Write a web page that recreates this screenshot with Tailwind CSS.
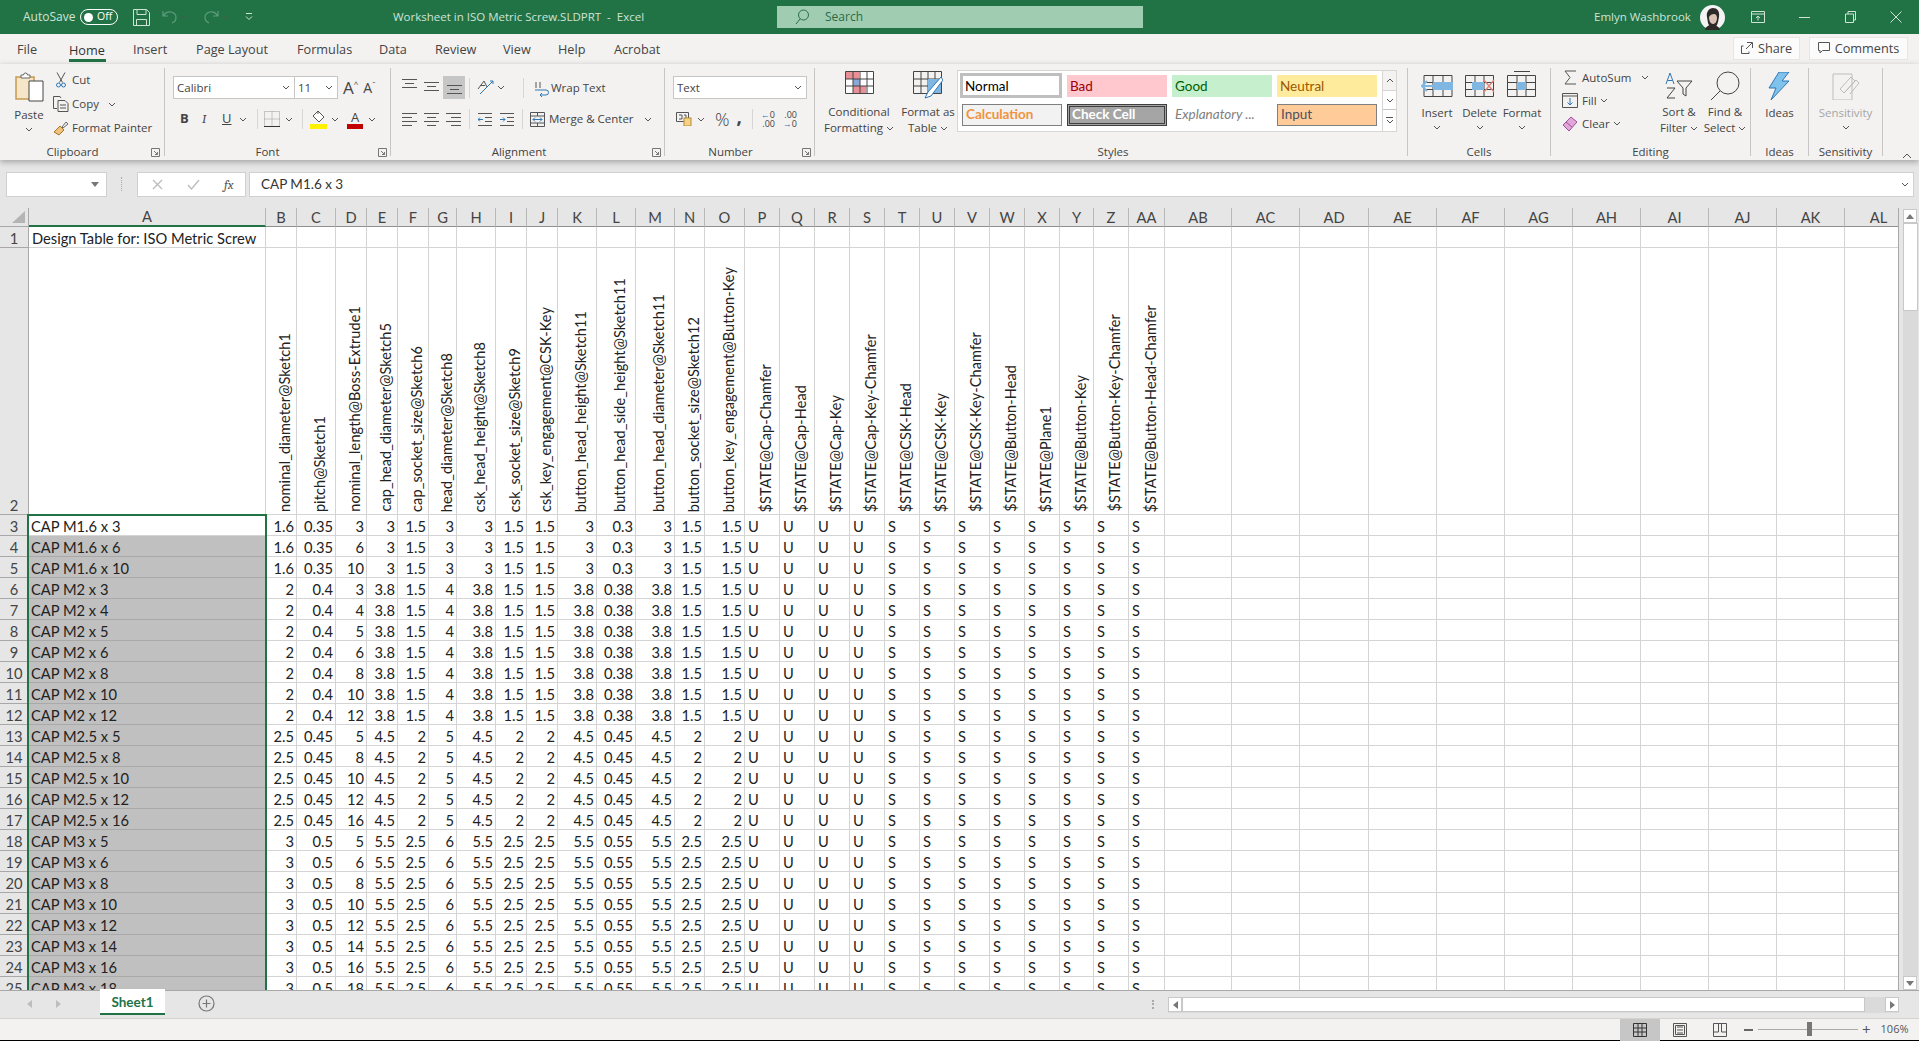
<!DOCTYPE html>
<html>
<head>
<title>Worksheet in ISO Metric Screw.SLDPRT - Excel</title>
<meta charset="UTF-8" />
<script src="https://cdn.jsdelivr.net/npm/@tailwindcss/browser@4"></script>
</head>
<body class="w-[1919px] h-[1041px] overflow-hidden bg-[#e6e6e6] font-['Open_Sans',sans-serif] text-[11.5px] text-[#444]">

<svg class="hidden">
  <symbol id="chev" viewBox="0 0 8 5"><path d="M1 1l3 3 3-3" fill="none" stroke="#555" stroke-width="1"/></symbol>
  <symbol id="launch" viewBox="0 0 9 9"><path d="M.5.5h8v8h-8zM3 3l3.500 3.500M6.500 4v2.500H4" fill="none" stroke="#777" stroke-width="1"/></symbol>
</svg>

<!-- title bar -->
<div class="h-[34px] bg-[#217346] flex items-center text-[#cfe3d7] text-[12px]">
  <span class="ml-[23px] w-[52px]">AutoSave</span>
  <div class="ml-[5px] w-[38px] h-[16px] rounded-full border border-white flex items-center text-[10.5px] text-white">
    <span class="ml-[3px] w-[9px] h-[9px] rounded-full bg-white"></span><span class="ml-[4px]">Off</span>
  </div>
  <svg class="ml-[15px]" width="17" height="17" viewBox="0 0 17 17" fill="none" stroke="#cfe3d7"><path d="M.5.500h13l3 3v13H.5zM4 .5v5h9v-5M3.500 16.500v-6h10v6"/></svg>
  <svg class="ml-[12px]" width="16" height="14" viewBox="0 0 16 14" fill="none" stroke="#5f9c7c" stroke-width="1.2"><path d="M1 1v5h5M1.500 6C3 3 6 1.500 9 2c3 .6 5 3 5 5.500 0 2.500-1.500 4.500-4 5.500"/></svg>
  <svg class="ml-[3px]" width="7" height="5"><use href="#chev"/></svg>
  <svg class="ml-[15px]" width="16" height="14" viewBox="0 0 16 14" fill="none" stroke="#5f9c7c" stroke-width="1.2"><path d="M15 1v5h-5M14.500 6C13 3 10 1.500 7 2c-3 .6-5 3-5 5.500 0 2.500 1.500 4.500 4 5.500"/></svg>
  <svg class="ml-[3px]" width="7" height="5"><use href="#chev"/></svg>
  <svg class="ml-[16px]" width="8" height="9" viewBox="0 0 8 9" fill="none" stroke="#cfe3d7"><path d="M1 .5h6M1 3.500l3 3 3-3"/></svg>
  <span class="ml-[140px] w-[250px] text-[11.5px] whitespace-pre">Worksheet in ISO Metric Screw.SLDPRT  -  Excel</span>
  <div class="ml-[134px] w-[366px] h-[22px] bg-[#a0cdb2] flex items-center text-[#2c6b49]">
    <svg class="ml-[18px]" width="14" height="16" viewBox="0 0 14 16" fill="none" stroke="#2c6b49"><circle cx="8.500" cy="6" r="5"/><path d="M5 10l-4 5"/></svg>
    <span class="ml-[16px]">Search</span>
  </div>
  <span class="ml-[451px] w-[97px] whitespace-nowrap text-[11.5px]">Emlyn Washbrook</span>
  <svg class="ml-[9px]" width="25" height="25" viewBox="0 0 25 25"><circle cx="12.500" cy="12.500" r="12.500" fill="#f4f4f4"/><path d="M7 12c-1-5 2-9 6-9s7 3 6 9l-1 5c-1 4-3 6-5 6s-4-2-5-5z" fill="#2d2a28"/><path d="M9 12c1-2 3-3 5-3s3 2 3 4-1 6-4 6-4-4-4-7z" fill="#d9c3b5"/><path d="M5 25c1-4 4-5 7-5s7 1 8 5z" fill="#2d2a28"/></svg>
  <div class="ml-auto flex">
    <span class="w-[46px] flex justify-center"><svg width="14" height="12" viewBox="0 0 14 12" fill="none" stroke="#cfe3d7"><path d="M.5.500h13v11H.5zM.5 3h13M7 9.500V5M5 7l2-2 2 2"/></svg></span>
    <span class="w-[46px] flex justify-center items-center"><span class="w-[11px] h-px bg-[#cfe3d7]"></span></span>
    <span class="w-[46px] flex justify-center"><svg width="11" height="12" viewBox="0 0 11 12" fill="none" stroke="#cfe3d7"><path d="M.5 3h8v8.500h-8zM3 3V.500h7.500V9H8.500"/></svg></span>
    <span class="w-[46px] flex justify-center"><svg width="12" height="12" viewBox="0 0 12 12" stroke="#cfe3d7"><path d="M.500.500l11 11M11.500.500l-11 11"/></svg></span>
  </div>
</div>

<!-- tabs -->
<div class="h-[30px] bg-[#f3f2f1] flex items-center text-[12.7px] leading-none relative">
  <span class="ml-[17px] w-[52px]">File</span>
  <span class="w-[64px] h-[30px] pt-[10px] text-[#333] relative">Home<span class="absolute left-0 w-[37px] top-[25px] h-[3px] bg-[#217346]"></span></span>
  <span class="w-[63px]">Insert</span>
  <span class="w-[101px]">Page Layout</span>
  <span class="w-[82px]">Formulas</span>
  <span class="w-[56px]">Data</span>
  <span class="w-[68px]">Review</span>
  <span class="w-[55px]">View</span>
  <span class="w-[56px]">Help</span>
  <span>Acrobat</span>
  <div class="ml-auto mr-[11px] flex gap-[9px] mt-[-2px]">
    <div class="w-[67px] h-[23px] bg-white/70 border border-[#e8e6e4] flex items-center justify-center gap-[5px]">
      <svg width="12" height="12" viewBox="0 0 12 12" fill="none" stroke="#555"><path d="M6 .500h5.500V6M11 1L5 7M8 9.500v2H.500V4h2"/></svg>Share</div>
    <div class="w-[99px] h-[23px] bg-white/70 border border-[#e8e6e4] flex items-center justify-center gap-[5px]">
      <svg width="12" height="12" viewBox="0 0 12 12" fill="none" stroke="#555"><path d="M.500.500h11v8H4.500L2 11V8.500H.500z"/></svg>Comments</div>
  </div>
</div>

<!-- ribbon -->
<div class="h-[96px] bg-[#f3f2f1] shadow-[0_2px_6px_rgba(0,0,0,0.3)] flex pt-[4px] relative z-10">

  <!-- clipboard -->
  <div class="w-[165px] h-[88px] border-r border-[#c8c6c4] flex flex-col">
    <div class="flex-1 flex">
      <div class="ml-[9px] w-[40px] flex flex-col items-center pt-[4px]">
        <svg width="29" height="30" viewBox="0 0 29 30" fill="none"><path d="M1 5h18v22H1z" fill="#f6e6c8" stroke="#c79a4f" stroke-width="1.500"/><path d="M6 6V3h2.500a2 2 0 0 1 4 0H15v3z" fill="#fff" stroke="#666"/><path d="M14 9h14v20H14z" fill="#fff" stroke="#444"/></svg>
        <span class="mt-[5px] leading-[16px]">Paste</span>
        <svg class="mt-[4px]" width="8" height="5"><use href="#chev"/></svg>
      </div>
      <div class="ml-[4px] flex flex-col">
        <div class="h-[24px] flex items-center">
          <svg class="ml-[3px] mr-[6px]" width="10" height="16" viewBox="0 0 10 16" fill="none" stroke="#555"><path d="M1 .500l5.500 10M9 .500L3.500 10.500"/><circle cx="2.500" cy="13" r="2" stroke="#2f77b5"/><circle cx="7.500" cy="13" r="2" stroke="#2f77b5"/></svg>Cut</div>
        <div class="h-[24px] flex items-center">
          <svg class="mr-[3px]" width="16" height="16" viewBox="0 0 16 16" fill="none" stroke="#555"><path d="M4 12.500H.5V.500H7L8 2M5 4.500h7l3 3v8H5zM7 9h6M7 12h6"/></svg>Copy
          <svg class="ml-[9px]" width="8" height="5"><use href="#chev"/></svg></div>
        <div class="h-[24px] flex items-center whitespace-nowrap">
          <svg class="mr-[3px]" width="16" height="16" viewBox="0 0 16 16" fill="none"><path d="M9 7l4-5 2 2-5 4z" stroke="#666"/><path d="M1 12l6-6 4 4-5 5z" fill="#f0c27a" stroke="#a9742d"/></svg>Format Painter</div>
      </div>
    </div>
    <div class="h-[8px] flex items-center"><span class="flex-1 text-center pr-[6px]">Clipboard</span><svg class="mr-[4px]" width="9" height="9"><use href="#launch"/></svg></div>
  </div>

  <!-- font -->
  <div class="w-[226px] h-[88px] border-r border-[#c8c6c4] flex flex-col">
    <div class="flex-1">
      <div class="mt-[8px] ml-[8px] flex items-center h-[23px]">
        <div class="w-[122px] h-[23px] bg-white border border-[#c8c6c4] flex items-center pl-[3px] justify-between pr-[4px]">Calibri<svg width="8" height="5"><use href="#chev"/></svg></div>
        <div class="w-[43px] h-[23px] bg-white border border-l-0 border-[#c8c6c4] flex items-center pl-[3px] justify-between pr-[4px]">11<svg width="8" height="5"><use href="#chev"/></svg></div>
        <span class="ml-[5px] text-[17px] leading-none">A</span><span class="text-[8px] mt-[-8px]">^</span>
        <span class="ml-[5px] text-[14px] leading-none">A</span><span class="text-[8px] mt-[-8px]">ˇ</span>
      </div>
      <div class="mt-[9px] flex items-center h-[22px] text-[13px]">
        <b class="ml-[15px] w-[22px]">B</b><i class="w-[20px] font-serif">I</i><u class="w-[15px]">U</u>
        <svg class="ml-[2px]" width="8" height="5"><use href="#chev"/></svg>
        <span class="ml-[10px] w-px h-[20px] bg-[#d8d6d4]"></span>
        <svg class="ml-[6px]" width="16" height="16" viewBox="0 0 16 16" fill="none" stroke="#999" stroke-dasharray="1 1"><path d="M.500.500h15v15H.500zM8 .500v15M.500 8h15"/><path d="M0 15.500h16" stroke="#333" stroke-dasharray="none"/></svg>
        <svg class="ml-[5px]" width="8" height="5"><use href="#chev"/></svg>
        <span class="ml-[9px] w-px h-[20px] bg-[#d8d6d4]"></span>
        <svg class="ml-[7px]" width="17" height="19" viewBox="0 0 17 19" fill="none"><path d="M8 1l6 6-5 5-6-6z" fill="#fff" stroke="#555"/><path d="M8 1V4" stroke="#555"/><rect y="14" width="17" height="5" fill="#fff200"/></svg>
        <svg class="ml-[4px]" width="8" height="5"><use href="#chev"/></svg>
        <span class="ml-[8px] w-[16px] flex flex-col items-center leading-[14px] font-normal">A<span class="w-[16px] h-[5px] bg-[#c00000]"></span></span>
        <svg class="ml-[5px]" width="8" height="5"><use href="#chev"/></svg>
      </div>
    </div>
    <div class="h-[8px] flex items-center"><span class="flex-1 text-center pr-[8px]">Font</span><svg class="mr-[3px]" width="9" height="9"><use href="#launch"/></svg></div>
  </div>

  <!-- alignment -->
  <div class="w-[274px] h-[88px] border-r border-[#c8c6c4] flex flex-col">
    <div class="flex-1">
      <div class="mt-[8px] flex items-center h-[23px]">
        <svg class="ml-[11px] -translate-y-[3px]" width="15" height="12" viewBox="0 0 15 12" stroke="#555"><path d="M0 .500h15M3 4.500h9M0 8.500h15"/></svg>
        <svg class="ml-[7px] -translate-y-[2px]" width="15" height="12" viewBox="0 0 15 12" stroke="#555"><path d="M0 2.500h15M3 6.500h9M0 10.500h15"/></svg>
        <span class="ml-[4px] w-[22px] h-[23px] bg-[#c6c6c6] flex items-center justify-center"><svg width="15" height="12" viewBox="0 0 15 12" stroke="#555"><path d="M0 3.500h15M3 7.500h9M0 11.500h15"/></svg></span>
        <span class="ml-[4px] w-px h-[20px] bg-[#d8d6d4]"></span>
        <svg class="ml-[7px]" width="17" height="18" viewBox="0 0 17 18" fill="none" stroke="#555"><path d="M3 15l13-13" stroke="#2f77b5"/><path d="M13 2h3v3" stroke="#2f77b5"/><path d="M1 10l6-8 3 6M3 6.500h5"/></svg>
        <svg class="ml-[3px]" width="8" height="5"><use href="#chev"/></svg>
        <span class="ml-[18px] w-px h-[20px] bg-[#d8d6d4]"></span>
        <svg class="ml-[10px]" width="15" height="18" viewBox="0 0 15 18" fill="none" stroke="#2f77b5"><path d="M1 11h11a2.500 2.500 0 0 1 0 5H6M8 14l-2 2 2 2"/><path d="M2 3v6M6 3v6" stroke="#555"/></svg>
        <span class="ml-[2px]">Wrap Text</span>
      </div>
      <div class="mt-[9px] flex items-center h-[22px]">
        <svg class="ml-[11px]" width="15" height="13" viewBox="0 0 15 13" stroke="#555"><path d="M0 .500h15M0 4.500h10M0 8.500h15M0 12.500h10"/></svg>
        <svg class="ml-[7px]" width="15" height="13" viewBox="0 0 15 13" stroke="#555"><path d="M0 .500h15M3 4.500h9M0 8.500h15M3 12.500h9"/></svg>
        <svg class="ml-[7px]" width="15" height="13" viewBox="0 0 15 13" stroke="#555"><path d="M0 .500h15M5 4.500h10M0 8.500h15M5 12.500h10"/></svg>
        <span class="ml-[8px] w-px h-[20px] bg-[#d8d6d4]"></span>
        <svg class="ml-[8px]" width="14" height="13" viewBox="0 0 14 13" fill="none" stroke="#555"><path d="M0 .500h14M7 4.500h7M7 8.500h7M0 12.500h14"/><path d="M5 6.500H0M2 4.500l-2 2 2 2" stroke="#2f77b5"/></svg>
        <svg class="ml-[8px]" width="14" height="13" viewBox="0 0 14 13" fill="none" stroke="#555"><path d="M0 .500h14M7 4.500h7M7 8.500h7M0 12.500h14"/><path d="M0 6.500h5M3 4.500l2 2-2 2" stroke="#2f77b5"/></svg>
        <span class="ml-[8px] w-px h-[20px] bg-[#d8d6d4]"></span>
        <svg class="ml-[7px]" width="15" height="15" viewBox="0 0 15 15" fill="none" stroke="#555"><path d="M.500.500h14v14H.500zM.500 4h14M.500 11h14M7.500.500V4M7.500 11v4"/><path d="M3 7.500h9M5 5.500l-2 2 2 2M10 5.500l2 2-2 2" stroke="#2f77b5"/></svg>
        <span class="ml-[4px] whitespace-nowrap">Merge &amp; Center</span>
        <svg class="ml-[10px]" width="8" height="5"><use href="#chev"/></svg>
      </div>
    </div>
    <div class="h-[8px] flex items-center"><span class="flex-1 text-center pr-[5px]">Alignment</span><svg class="mr-[3px]" width="9" height="9"><use href="#launch"/></svg></div>
  </div>

  <!-- number -->
  <div class="w-[150px] h-[88px] border-r border-[#c8c6c4] flex flex-col">
    <div class="flex-1">
      <div class="mt-[8px] ml-[8px] w-[134px] h-[23px] bg-white border border-[#c8c6c4] flex items-center pl-[3px] pr-[4px] justify-between">Text<svg width="8" height="5"><use href="#chev"/></svg></div>
      <div class="mt-[9px] flex items-center h-[22px]">
        <svg class="ml-[11px]" width="16" height="14" viewBox="0 0 16 14" fill="none"><path d="M.500.500h12v9H.500z" stroke="#555"/><path d="M3 3h3v4H3M8 3h2v4" stroke="#555"/><rect x="8" y="6" width="7" height="8" fill="#f3d38a" stroke="#b98b2c"/></svg>
        <svg class="ml-[5px]" width="8" height="5"><use href="#chev"/></svg>
        <span class="ml-[10px] text-[18px] font-light leading-none">%</span>
        <span class="ml-[7px] text-[19px] font-bold leading-none mt-[-6px]">,</span>
        <span class="ml-[10px] w-px h-[20px] bg-[#d8d6d4]"></span>
        <span class="ml-[6px] w-[16px] flex flex-col text-[9px] leading-[9px] text-right"><span><span class="text-[#2f77b5]">←</span>0</span><span>.00</span></span>
        <span class="ml-[6px] w-[16px] flex flex-col text-[9px] leading-[9px] text-right"><span>.00</span><span><span class="text-[#2f77b5]">→</span>0</span></span>
      </div>
    </div>
    <div class="h-[8px] flex items-center"><span class="flex-1 text-center pr-[6px]">Number</span><svg class="mr-[3px]" width="9" height="9"><use href="#launch"/></svg></div>
  </div>

  <!-- styles -->
  <div class="w-[593px] h-[88px] border-r border-[#c8c6c4] flex flex-col">
    <div class="flex-1 flex">
      <div class="ml-[6px] w-[76px] flex flex-col items-center pt-[3px] leading-[16px] whitespace-nowrap">
        <svg width="29" height="23" viewBox="0 0 29 23" fill="none"><path d="M.500.500h28v22H.500z" fill="#fff"/><path d="M1 1h13v7H1zM8 15h13v7H8z" fill="#e98f96"/><path d="M8 8h7v7H8z" fill="#8aa8d8"/><path d="M.500.500h28v22H.500zM.500 8h28M.500 15h28M8 .500v22M15 .500v22M22 .500v22" stroke="#444"/></svg>
        <span class="mt-[10px]">Conditional</span>
        <span class="flex items-center gap-[3px]">Formatting<svg width="8" height="5"><use href="#chev"/></svg></span>
      </div>
      <div class="ml-[1px] w-[60px] flex flex-col items-center pt-[3px] leading-[16px] whitespace-nowrap">
        <svg width="30" height="28" viewBox="0 0 30 28" fill="none"><path d="M.500.500h28v22H.500zM.500 8h28M.500 15h28M8 .500v22M15 .500v22M22 .500v22" stroke="#444"/><path d="M15 8h13v14H15z" fill="#7fb7e2"/><path d="M28 6L15 21l-3 6 6-2L30 9z" fill="#fff" stroke="#2f77b5"/></svg>
        <span class="mt-[5px]">Format as</span>
        <span class="flex items-center gap-[3px]">Table<svg width="8" height="5"><use href="#chev"/></svg></span>
      </div>
      <div class="ml-[-1px] mt-[2px] w-[440px] h-[62px] bg-white border border-[#d8d6d4] flex text-[13.5px] font-['Lato',sans-serif] leading-none">
        <div class="w-[425px] grid grid-cols-[102px_100px_100px_100px] gap-x-[5px] gap-y-[6px] pl-[2px] pt-[2px] content-start">
          <div class="h-[25px] border-[3px] border-[#bfbfbf] text-black flex items-center pl-[2px] pt-[2px]">Normal</div>
          <div class="h-[22px] mt-[2px] bg-[#ffc7ce] text-[#9c0006] flex items-center pl-[3px] pt-[2px]">Bad</div>
          <div class="h-[22px] mt-[2px] bg-[#c6efce] text-[#006100] flex items-center pl-[3px] pt-[2px]">Good</div>
          <div class="h-[22px] mt-[2px] bg-[#ffeb9c] text-[#9c5700] flex items-center pl-[3px] pt-[2px]">Neutral</div>
          <div class="h-[22px] ml-[2px] bg-[#f2f2f2] border border-[#7f7f7f] text-[#f0933c] font-bold flex items-center pl-[3px]">Calculation</div>
          <div class="h-[22px] bg-[#a5a5a5] border-[3px] border-double border-[#3f3f3f] text-white font-bold flex items-center pl-[2px]">Check Cell</div>
          <div class="h-[22px] text-[#7f7f7f] italic flex items-center pl-[3px]">Explanatory ...</div>
          <div class="h-[22px] bg-[#ffcc99] border border-[#7f7f7f] text-[#4f4f5f] flex items-center pl-[3px]">Input</div>
        </div>
        <div class="ml-auto w-[14px] flex flex-col bg-[#f3f2f1] border-l border-[#d8d6d4]">
          <span class="h-[20px] flex items-center justify-center border-b border-[#d8d6d4]"><svg class="rotate-180" width="8" height="5"><use href="#chev"/></svg></span>
          <span class="h-[19px] bg-white flex items-center justify-center border-b border-[#c8c6c4]"><svg width="8" height="5"><use href="#chev"/></svg></span>
          <span class="flex-1 bg-white flex flex-col items-center justify-center"><span class="w-[7px] h-px bg-[#555] mb-[1px]"></span><svg width="8" height="5"><use href="#chev"/></svg></span>
        </div>
      </div>
    </div>
    <div class="h-[8px] text-center pl-[4px] leading-[8px]">Styles</div>
  </div>

  <!-- cells -->
  <div class="w-[143px] h-[88px] border-r border-[#c8c6c4] flex flex-col">
    <div class="flex-1 flex leading-[16px]">
      <div class="ml-[7px] w-[44px] flex flex-col items-center pt-[7px]">
        <svg width="33" height="22" viewBox="0 0 33 22" fill="none"><path d="M3 .500h28v21H3zM3 7.500h28M3 14.500h28M12 .500v21M22 .500v21" stroke="#444"/><path d="M12 7h20v8H12z" fill="#7fb7e2"/><path d="M14 11H1M6 6l-5 5 5 5" stroke="#7fb7e2" stroke-width="2"/></svg>
        <span class="mt-[8px]">Insert</span>
        <svg class="mt-[4px]" width="8" height="5"><use href="#chev"/></svg>
      </div>
      <div class="w-[41px] flex flex-col items-center pt-[7px]">
        <svg width="30" height="22" viewBox="0 0 30 22" fill="none"><path d="M.500.500h28v21H.500zM.500 7.500h28M.500 14.500h28M10 .500v21M19 .500v21" stroke="#444"/><path d="M7 7h12v8H7z" fill="#7fb7e2"/><path d="M19 5l10 12M29 5L19 17" stroke="#e0837a" stroke-width="1.300"/></svg>
        <span class="mt-[8px]">Delete</span>
        <svg class="mt-[4px]" width="8" height="5"><use href="#chev"/></svg>
      </div>
      <div class="w-[44px] flex flex-col items-center pt-[3px]">
        <svg width="30" height="26" viewBox="0 0 30 26" fill="none"><path d="M.500 4.500h28v21H.500zM.500 11.500h28M.500 18.500h28M10 4.500v21M19 4.500v21M7 .500h16" stroke="#444"/><path d="M10 11h9v8h-9z" fill="#7fb7e2"/></svg>
        <span class="mt-[8px]">Format</span>
        <svg class="mt-[4px]" width="8" height="5"><use href="#chev"/></svg>
      </div>
    </div>
    <div class="h-[8px] text-center leading-[8px]">Cells</div>
  </div>

  <!-- editing -->
  <div class="w-[200px] h-[88px] border-r border-[#c8c6c4] flex flex-col">
    <div class="flex-1 flex">
      <div class="w-[106px] flex flex-col mt-[-2px]">
        <div class="h-[23px] flex items-center whitespace-nowrap"><svg class="ml-[13px] mr-[6px]" width="12" height="15" viewBox="0 0 12 15" fill="none" stroke="#555"><path d="M12 1H1l5 6.500L1 14h11"/></svg>AutoSum<svg class="ml-[10px]" width="8" height="5"><use href="#chev"/></svg></div>
        <div class="h-[23px] flex items-center"><svg class="ml-[11px] mr-[4px]" width="16" height="15" viewBox="0 0 16 15" fill="none"><path d="M.500.500h15v14H.500zM.500 3h15" stroke="#555"/><path d="M8 5v7M5.500 9.500L8 12l2.500-2.500" stroke="#2f77b5"/></svg>Fill<svg class="ml-[3px]" width="8" height="5"><use href="#chev"/></svg></div>
        <div class="h-[23px] flex items-center"><svg class="ml-[11px] mr-[4px]" width="16" height="16" viewBox="0 0 16 16" fill="none"><path d="M1 9l8-8 6 5-8 9z" fill="#e3a6d8" stroke="#a0509a"/><path d="M4 6l6 5" stroke="#a0509a"/></svg>Clear<svg class="ml-[3px]" width="8" height="5"><use href="#chev"/></svg></div>
      </div>
      <div class="w-[44px] flex flex-col items-center pt-[4px] leading-[16px] whitespace-nowrap">
        <svg width="28" height="27" viewBox="0 0 28 27" fill="none" stroke="#444"><path d="M1 12L5 1l4 11M2.500 8.500h5" stroke="#2f77b5"/><path d="M2 16h8l-8 10h8M12 9h15l-6 7v8l-3-2v-6z"/></svg>
        <span class="mt-[5px]">Sort &amp;</span>
        <span class="flex items-center gap-[3px]">Filter<svg width="8" height="5"><use href="#chev"/></svg></span>
      </div>
      <div class="w-[48px] flex flex-col items-center pt-[3px] leading-[16px] whitespace-nowrap">
        <svg width="30" height="30" viewBox="0 0 30 30" fill="none" stroke="#444"><circle cx="18" cy="12" r="11"/><path d="M10 20L1 29"/></svg>
        <span class="mt-[3px]">Find &amp;</span>
        <span class="flex items-center gap-[3px]">Select<svg width="8" height="5"><use href="#chev"/></svg></span>
      </div>
    </div>
    <div class="h-[8px] text-center leading-[8px]">Editing</div>
  </div>

  <!-- ideas -->
  <div class="w-[58px] h-[88px] border-r border-[#c8c6c4] flex flex-col items-center">
    <div class="flex-1 flex flex-col items-center pt-[4px] leading-[16px]">
      <svg width="22" height="28" viewBox="0 0 22 28"><path d="M11 0h10l-7 9h7L3 28l5-12H1z" fill="#7fc2ec" stroke="#2f77b5"/></svg>
      <span class="mt-[5px]">Ideas</span>
    </div>
    <div class="h-[8px] leading-[8px]">Ideas</div>
  </div>

  <!-- sensitivity -->
  <div class="w-[74px] h-[88px] border-r border-[#c8c6c4] flex flex-col items-center">
    <div class="flex-1 flex flex-col items-center pt-[4px] leading-[16px] text-[#a6a6a6]">
      <svg width="28" height="28" viewBox="0 0 28 28" fill="none" stroke="#bdbdbd"><path d="M1 2h19v26H1z"/><path d="M8 17L19 5l4 4-11 12zM13 20l11-12 3 3-9 11"/></svg>
      <span class="mt-[5px]">Sensitivity</span>
      <svg class="mt-[4px]" width="8" height="5"><use href="#chev"/></svg>
    </div>
    <div class="h-[8px] leading-[8px]">Sensitivity</div>
  </div>
  <svg class="ml-[19px] mt-[85px]" width="10" height="6" viewBox="0 0 10 6" fill="none" stroke="#555"><path d="M1 5l4-4 4 4"/></svg>
</div>

<!-- formula bar -->
<div class="h-[48px] bg-[#e6e6e6] pt-[12px] flex text-[#666]">
  <div class="ml-[6px] w-[101px] h-[25px] bg-white border border-[#d0d0d0] flex items-center justify-end pr-[7px]"><span class="border-x-[4px] border-x-transparent border-t-[5px] border-t-[#777]"></span></div>
  <span class="ml-[14px] w-px h-[14px] mt-[5px] border-l border-dotted border-[#aaa]"></span>
  <div class="ml-[15px] w-[109px] h-[25px] bg-white border border-[#d0d0d0] flex items-center">
    <svg class="ml-[14px]" width="11" height="11" viewBox="0 0 11 11" stroke="#bbb" stroke-width="1.300"><path d="M1 1l9 9M10 1l-9 9"/></svg>
    <svg class="ml-[24px]" width="13" height="11" viewBox="0 0 13 11" fill="none" stroke="#bbb" stroke-width="1.300"><path d="M1 6l3.500 4L12 1"/></svg>
    <i class="ml-[24px] font-serif text-[13px] text-[#555]">fx</i>
  </div>
  <div class="ml-[3px] w-[1665px] h-[25px] bg-white border border-[#d0d0d0] flex items-center pl-[11px] pr-[4px] justify-between text-[#333] text-[13.5px] font-['Lato',sans-serif]">CAP M1.6 x 3<svg width="8" height="5"><use href="#chev"/></svg></div>
</div>

<!-- sheet -->
<div class="h-[782px] flex relative">
  <div id="sheet" class="w-[1899px] h-[782px] overflow-hidden relative bg-white border-r border-[#a8a8a8] font-['Lato',sans-serif] text-[14.7px] text-[#222] leading-none"></div>
  <div class="w-[20px] flex flex-col items-center pl-[2px]">
    <span class="mt-[1px] w-[14px] h-[14px] bg-white border border-[#c8c8c8] flex items-center justify-center"><span class="border-x-[4px] border-x-transparent border-b-[5px] border-b-[#777]"></span></span>
    <div class="flex-1 w-[15px] bg-[#dadada]"><div class="w-[15px] h-[88px] bg-white border border-[#c8c8c8]"></div></div>
    <span class="w-[14px] h-[14px] bg-white border border-[#c8c8c8] flex items-center justify-center"><span class="border-x-[4px] border-x-transparent border-t-[5px] border-t-[#777]"></span></span>
  </div>
</div>

<!-- sheet tabs -->
<div class="h-[28px] bg-[#e6e6e6] border-t border-[#a8a8a8] flex relative">
  <span class="ml-[27px] mt-[9px] border-y-[4px] border-y-transparent border-r-[5px] border-r-[#bdbdbd] h-0"></span>
  <span class="ml-[24px] mt-[9px] border-y-[4px] border-y-transparent border-l-[5px] border-l-[#bdbdbd] h-0"></span>
  <div class="ml-[39px] mt-[-2px] w-[65px] h-[26px] bg-white border-b-[2px] border-[#217346] text-[#217346] font-['Lato',sans-serif] font-bold text-[13.5px] flex items-center justify-center pt-[2px]">Sheet1</div>
  <svg class="ml-[33px] mt-[4px]" width="17" height="17" viewBox="0 0 17 17" fill="none" stroke="#777" stroke-width="1.200"><circle cx="8.500" cy="8.500" r="7.500"/><path d="M8.500 4.500v8M4.500 8.500h8"/></svg>
  <span class="ml-[937px] mt-[9px] w-[2px] h-[9px] border-l-2 border-dotted border-[#aaa]"></span>
  <div class="ml-[14px] mt-[6px] w-[731px] h-[16px] flex bg-[#dadada]">
    <span class="w-[14px] h-[15px] bg-white border border-[#c8c8c8] flex items-center justify-center"><span class="border-y-[4px] border-y-transparent border-r-[5px] border-r-[#777]"></span></span>
    <span class="w-[683px] h-[15px] bg-white border border-[#c8c8c8]"></span>
    <span class="ml-auto w-[14px] h-[15px] bg-white border border-[#c8c8c8] flex items-center justify-center"><span class="border-y-[4px] border-y-transparent border-l-[5px] border-l-[#777]"></span></span>
  </div>
</div>

<!-- status bar -->
<div class="h-[23px] bg-[#f3f2f1] border-t border-[#d6d2ce] border-b border-b-black flex items-center text-[#555]">
  <div class="ml-[1620px] w-[40px] h-[22px] bg-[#c6c6c6] flex items-center justify-center">
    <svg width="14" height="14" viewBox="0 0 14 14" fill="none" stroke="#333"><path d="M.500.500h13v13H.500zM.500 5h13M.500 9h13M5 .500v13M9 .500v13"/></svg>
  </div>
  <svg class="ml-[13px]" width="14" height="14" viewBox="0 0 14 14" fill="none" stroke="#555"><path d="M.500.500h13v13H.500zM4 4h6M4 7h6M4 10h6"/><path d="M2.500 2.500h9v9h-9z"/></svg>
  <svg class="ml-[26px]" width="14" height="14" viewBox="0 0 14 14" fill="none" stroke="#555"><path d="M.500.500h13v13H.500zM.500 9h5M13.500 9h-5M5.500.500V9M8.500.500V9"/></svg>
  <span class="ml-[17px] w-[9px] h-[2px] bg-[#666]"></span>
  <div class="ml-[5px] w-[100px] h-px bg-[#aaa] relative"><span class="absolute left-[49px] top-[-7px] w-[5px] h-[14px] bg-[#777]"></span></div>
  <span class="ml-[4px] text-[15px] leading-none">+</span>
  <span class="ml-[10px] text-[11px]">106%</span>
</div>

<script>
  // sheet contents
  var cols = ['A','B','C','D','E','F','G','H','I','J','K','L','M','N','O','P','Q','R','S','T','U','V','W','X','Y','Z','AA','AB','AC','AD','AE','AF','AG','AH','AI','AJ','AK','AL'];
  var heads = ['nominal_diameter@Sketch1','pitch@Sketch1','nominal_length@Boss-Extrude1','cap_head_diameter@Sketch5','cap_socket_size@Sketch6','head_diameter@Sketch8','csk_head_height@Sketch8','csk_socket_size@Sketch9','csk_key_engagement@CSK-Key','button_head_height@Sketch11','button_head_side_height@Sketch11','button_head_diameter@Sketch11','button_socket_size@Sketch12','button_key_engagement@Button-Key','$STATE@Cap-Chamfer','$STATE@Cap-Head','$STATE@Cap-Key','$STATE@Cap-Key-Chamfer','$STATE@CSK-Head','$STATE@CSK-Key','$STATE@CSK-Key-Chamfer','$STATE@Button-Head','$STATE@Plane1','$STATE@Button-Key','$STATE@Button-Key-Chamfer','$STATE@Button-Head-Chamfer'];
  var sizes = [
    ['M1.6',[3,6,10],[1.6,0.35,3,1.5,3,3,1.5,1.5,3,0.3,3,1.5,1.5]],
    ['M2',[3,4,5,6,8,10,12],[2,0.4,3.8,1.5,4,3.8,1.5,1.5,3.8,0.38,3.8,1.5,1.5]],
    ['M2.5',[5,8,10,12,16],[2.5,0.45,4.5,2,5,4.5,2,2,4.5,0.45,4.5,2,2]],
    ['M3',[5,6,8,10,12,14,16,18],[3,0.5,5.5,2.5,6,5.5,2.5,2.5,5.5,0.55,5.5,2.5,2.5]]
  ];
  var rowHead = 'bg-[#e6e6e6] border-r border-b border-[#a8a8a8] text-[#444] flex items-center justify-center pt-[2px]';
  var cell = 'border-r border-b border-[#d4d4d4] flex items-center pt-[2px]';
  var html = '<div class="bg-[#e6e6e6] border-r border-b border-[#a8a8a8] flex items-end justify-end pr-[3px] pb-[3px]"><span class="border-l-[13px] border-l-transparent border-b-[12px] border-b-[#b4b4b4]"></span></div>';
  cols.forEach(function (c) {
    var line = c == 'A' ? 'border-b-2 border-b-[#217346]' : 'border-b border-b-[#8f8f8f]';
    html += '<div class="bg-[#e6e6e6] border-r border-[#b8b8b8] ' + line + ' text-[#444] flex items-center justify-center">' + c + '</div>';
  });
  // row 1
  html += '<div class="' + rowHead + '">1</div>';
  cols.forEach(function (c, i) {
    html += '<div class="' + cell + ' pl-[3px] whitespace-nowrap">' + (i == 0 ? 'Design Table for: ISO Metric Screw' : '') + '</div>';
  });
  // row 2, rotated headings
  html += '<div class="' + rowHead + ' !items-end pb-[1px]">2</div>';
  cols.forEach(function (c, i) {
    var t = heads[i - 1] || '';
    html += '<div class="' + cell + ' !items-end justify-center pb-[2px] pl-[9px]"><span class="[writing-mode:vertical-rl] rotate-180 whitespace-nowrap text-[14.5px] tracking-[0.1px]">' + t + '</span></div>';
  });
  // data rows
  var row = 3;
  sizes.forEach(function (s) {
    s[1].forEach(function (len) {
      var v = s[2];
      var vals = [v[0], v[1], len, v[2], v[3], v[4], v[5], v[6], v[7], v[8], v[9], v[10], v[11], v[12]];
      html += '<div class="' + rowHead + '">' + row + '</div>';
      var sel = row == 3 ? 'bg-white border-r border-b border-[#d4d4d4] flex items-center pt-[2px]' : 'bg-[#c0c0c0] border-r border-b border-[#a9a9a9] flex items-center pt-[2px]';
      html += '<div class="' + sel + ' pl-[2px] whitespace-nowrap">CAP ' + s[0] + ' x ' + len + '</div>';
      cols.slice(1).forEach(function (c, i) {
        if (i < 14) html += '<div class="' + cell + ' justify-end pr-[2px]">' + vals[i] + '</div>';
        else if (i < 18) html += '<div class="' + cell + ' pl-[3px]">U</div>';
        else if (i < 26) html += '<div class="' + cell + ' pl-[3px]">S</div>';
        else html += '<div class="' + cell + '"></div>';
      });
      row++;
    });
  });
  document.getElementById('sheet').innerHTML =
    '<div class="grid w-max grid-cols-[29px_237px_31px_39px_31px_31px_31px_28px_39px_31px_31px_39px_39px_39px_30px_40px_35px_35px_35px_35px_35px_35px_35px_35px_35px_34px_35px_36px_67px_68px_69px_68px_68px_68px_68px_68px_68px_68px_68px] grid-rows-[19px_21px_267px_repeat(23,21px)]">' + html + '</div>' +
    '<div class="absolute left-[27px] top-[306px] w-[240px] h-[600px] border-2 border-[#217346]"></div>';
</script>
</body>
</html>
